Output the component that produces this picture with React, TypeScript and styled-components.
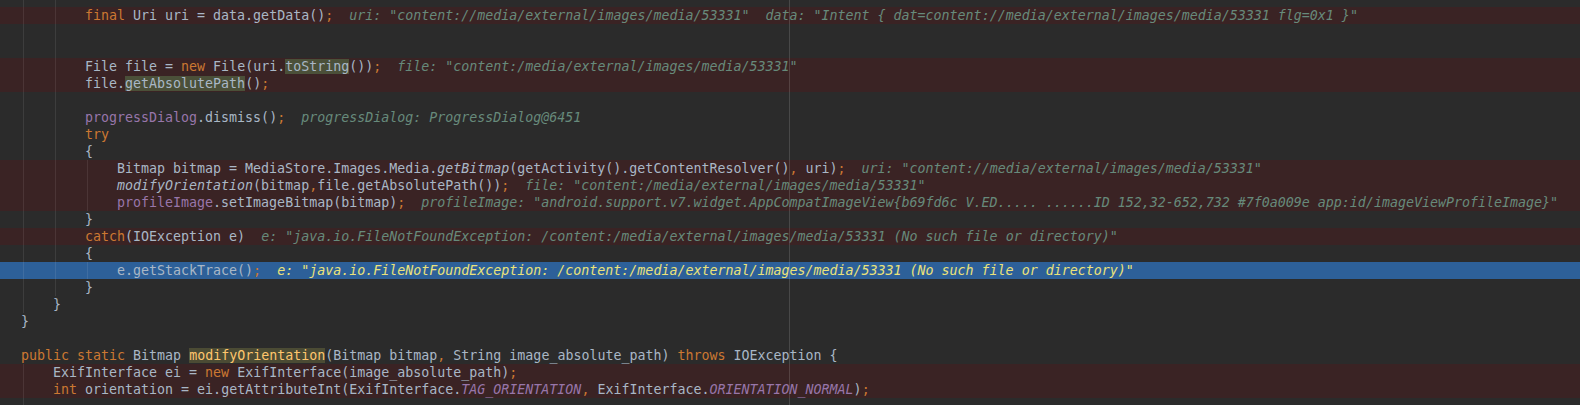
import React from "react";
import styled, { createGlobalStyle, css } from "styled-components";

const GlobalStyle = createGlobalStyle`
  html, body { margin: 0; padding: 0; background: #2b2b2b; }
  #root { width: 1580px; }
`;

type LineKind = "normal" | "break" | "exec";
type TokKind = "t" | "k" | "f" | "fi" | "i" | "d" | "hl" | "hld" | "h";

const Editor = styled.div`
  position: relative;
  width: 1580px;
  height: 405px;
  overflow: hidden;
  background: #2b2b2b;
  font-family: "DejaVu Sans Mono", "Liberation Mono", monospace;
  font-size: 13.3px;
  color: #a9b7c6;
  display: flex;
  flex-direction: column;
`;

const Line = styled.div<{ $kind: LineKind; $h?: number }>`
  display: flex;
  align-items: stretch;
  flex: 0 0 ${(p) => p.$h ?? 17}px;
  height: ${(p) => p.$h ?? 17}px;
  line-height: 17px;
  padding-left: 21px;
  white-space: pre;
  background: ${(p) =>
    p.$kind === "break" ? "#3a2324" : p.$kind === "exec" ? "#2d6099" : "transparent"};
`;

const Guide = styled.span`
  box-sizing: border-box;
  flex: 0 0 30px;
  width: 30px;
  margin-left: 2px;
  border-left: 1px solid rgba(255, 255, 255, 0.085);
`;

const Code = styled.span`
  display: block;
`;

const Token = styled.span<{ $kind: TokKind; $exec?: boolean }>`
  ${(p) => {
    switch (p.$kind) {
      case "k":
        return css`color: #cc7832;`;
      case "f":
        return css`color: #9876aa;`;
      case "fi":
        return css`color: #9876aa; font-style: italic;`;
      case "i":
        return css`font-style: italic;`;
      case "d":
        return css`color: #ffc66d;`;
      case "hl":
        return css`background: #4b5039;`;
      case "hld":
        return css`color: #ffc66d; background: #4b4b34;`;
      case "h":
        return css`
          font-style: italic;
          color: ${p.$exec ? "#ebe27a" : "#678a7b"};
        `;
      default:
        return css``;
    }
  }}
`;

const Margin = styled.div`
  position: absolute;
  top: 0;
  bottom: 0;
  left: 789px;
  width: 1px;
  background: rgba(255, 255, 255, 0.14);
  pointer-events: none;
`;

type Tok = [TokKind, string];
interface LineDef {
  kind: LineKind;
  guides: number;
  toks: Tok[];
  h?: number;
}

const EXC =
  'e: "java.io.FileNotFoundException: /content:/media/external/images/media/53331 (No such file or directory)"';

const lines: LineDef[] = [
  { kind: "normal", guides: 2, toks: [], h: 7 },
  {
    kind: "break",
    guides: 2,
    toks: [
      ["k", "final"],
      ["t", " Uri uri = data.getData()"],
      ["k", ";"],
      ["t", "  "],
      [
        "h",
        'uri: "content://media/external/images/media/53331"  data: "Intent { dat=content://media/external/images/media/53331 flg=0x1 }"',
      ],
    ],
  },
  { kind: "normal", guides: 2, toks: [] },
  { kind: "normal", guides: 2, toks: [] },
  {
    kind: "break",
    guides: 2,
    toks: [
      ["t", "File file = "],
      ["k", "new"],
      ["t", " File(uri."],
      ["hl", "toString"],
      ["t", "())"],
      ["k", ";"],
      ["t", "  "],
      ["h", 'file: "content:/media/external/images/media/53331"'],
    ],
  },
  {
    kind: "break",
    guides: 2,
    toks: [
      ["t", "file."],
      ["hl", "getAbsolutePath"],
      ["t", "()"],
      ["k", ";"],
    ],
  },
  { kind: "normal", guides: 2, toks: [] },
  {
    kind: "normal",
    guides: 2,
    toks: [
      ["f", "progressDialog"],
      ["t", ".dismiss()"],
      ["k", ";"],
      ["t", "  "],
      ["h", "progressDialog: ProgressDialog@6451"],
    ],
  },
  { kind: "normal", guides: 2, toks: [["k", "try"]] },
  { kind: "normal", guides: 2, toks: [["t", "{"]] },
  {
    kind: "break",
    guides: 3,
    toks: [
      ["t", "Bitmap bitmap = MediaStore.Images.Media."],
      ["i", "getBitmap"],
      ["t", "(getActivity().getContentResolver()"],
      ["k", ","],
      ["t", " uri)"],
      ["k", ";"],
      ["t", "  "],
      ["h", 'uri: "content://media/external/images/media/53331"'],
    ],
  },
  {
    kind: "break",
    guides: 3,
    toks: [
      ["i", "modifyOrientation"],
      ["t", "(bitmap"],
      ["k", ","],
      ["t", "file.getAbsolutePath())"],
      ["k", ";"],
      ["t", "  "],
      ["h", 'file: "content:/media/external/images/media/53331"'],
    ],
  },
  {
    kind: "break",
    guides: 3,
    toks: [
      ["f", "profileImage"],
      ["t", ".setImageBitmap(bitmap)"],
      ["k", ";"],
      ["t", "  "],
      [
        "h",
        'profileImage: "android.support.v7.widget.AppCompatImageView{b69fd6c V.ED..... ......ID 152,32-652,732 #7f0a009e app:id/imageViewProfileImage}"',
      ],
    ],
  },
  { kind: "normal", guides: 2, toks: [["t", "}"]] },
  {
    kind: "break",
    guides: 2,
    toks: [
      ["k", "catch"],
      ["t", "(IOException e)  "],
      ["h", EXC],
    ],
  },
  { kind: "normal", guides: 2, toks: [["t", "{"]] },
  {
    kind: "exec",
    guides: 3,
    toks: [
      ["t", "e.getStackTrace()"],
      ["k", ";"],
      ["t", "  "],
      ["h", EXC],
    ],
  },
  { kind: "normal", guides: 2, toks: [["t", "}"]] },
  { kind: "normal", guides: 1, toks: [["t", "}"]] },
  { kind: "normal", guides: 0, toks: [["t", "}"]] },
  { kind: "normal", guides: 0, toks: [] },
  {
    kind: "normal",
    guides: 0,
    toks: [
      ["k", "public static"],
      ["t", " Bitmap "],
      ["hld", "modifyOrientation"],
      ["t", "(Bitmap bitmap"],
      ["k", ","],
      ["t", " String image_absolute_path) "],
      ["k", "throws"],
      ["t", " IOException {"],
    ],
  },
  {
    kind: "break",
    guides: 1,
    toks: [
      ["t", "ExifInterface ei = "],
      ["k", "new"],
      ["t", " ExifInterface(image_absolute_path)"],
      ["k", ";"],
    ],
  },
  {
    kind: "break",
    guides: 1,
    toks: [
      ["k", "int"],
      ["t", " orientation = ei.getAttributeInt(ExifInterface."],
      ["fi", "TAG_ORIENTATION"],
      ["k", ","],
      ["t", " ExifInterface."],
      ["fi", "ORIENTATION_NORMAL"],
      ["t", ")"],
      ["k", ";"],
    ],
  },
  { kind: "normal", guides: 1, toks: [] },
];

export default function App() {
  return (
    <>
      <GlobalStyle />
      <Editor>
        {lines.map((ln, i) => (
          <Line key={i} $kind={ln.kind} $h={ln.h}>
            {Array.from({ length: ln.guides }).map((_, g) => (
              <Guide key={g} />
            ))}
            <Code>
              {ln.toks.map(([k, text], j) => (
                <Token key={j} $kind={k} $exec={ln.kind === "exec"}>
                  {text}
                </Token>
              ))}
            </Code>
          </Line>
        ))}
        <Margin />
      </Editor>
    </>
  );
}
